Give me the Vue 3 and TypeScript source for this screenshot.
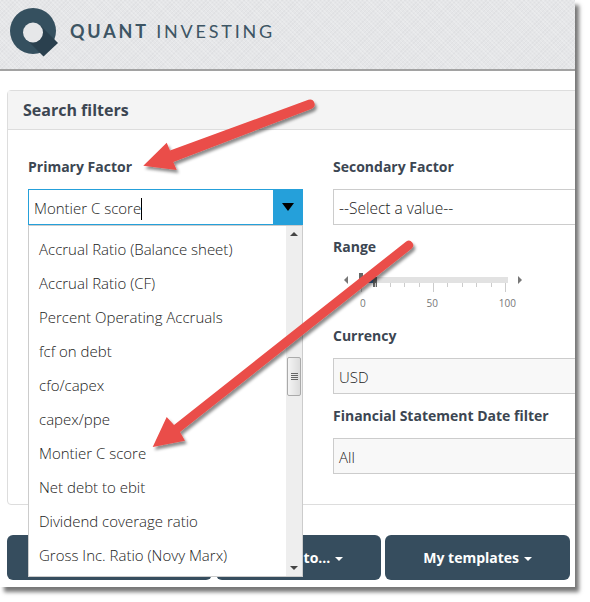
<template>
  <div class="shot">
    <div class="page">
      <header class="topbar">
        <svg class="logo" width="60" height="60" viewBox="0 0 60 60">
          <circle cx="33" cy="31" r="23" fill="#35505f" />
          <path d="M40 25 L58 43 L43.500 56.500 L26 39 Z" fill="#2a404e" />
          <circle cx="33" cy="32.500" r="10" fill="#e6e7e9" />
        </svg>
        <div class="brand"><b>QUANT</b> INVESTING</div>
      </header>

      <section class="panel">
        <div class="panel-head">Search filters</div>
        <div class="panel-body">
          <div class="col-left">
            <label class="lbl">Primary Factor</label>
            <div class="combo">
              <div class="combo-input">Montier C score<span class="caret"></span></div>
              <div class="combo-btn"><span class="tri-down"></span></div>
              <div class="dropdown">
                <ul class="options">
                  <li v-for="f in factors" :key="f">{{ f }}</li>
                </ul>
                <div class="scrollbar">
                  <span class="sb-up"></span>
                  <span class="sb-thumb"><i></i><i></i><i></i><i></i></span>
                  <span class="sb-down"></span>
                </div>
              </div>
            </div>
          </div>

          <div class="col-right">
            <label class="lbl">Secondary Factor</label>
            <div class="sel sel-white">--Select a value--</div>

            <label class="lbl lbl-gap">Range</label>
            <div class="slider">
              <span class="arr-l"></span>
              <div class="slider-main">
                <div class="track">
                  <span class="handle h1"></span>
                  <span class="fill"></span>
                  <span class="handle h2"></span>
                  <span class="rest"></span>
                </div>
                <div class="ticks">
                  <span v-for="n in 11" :key="n" class="tick" :class="{ major: n === 1 || n === 6 || n === 11 }"></span>
                </div>
                <div class="scale">
                  <span>0</span><span>50</span><span>100</span>
                </div>
              </div>
              <span class="arr-r"></span>
            </div>

            <label class="lbl">Currency</label>
            <div class="sel">USD</div>
            <label class="lbl lbl-gap">Financial Statement Date filter</label>
            <div class="sel">All</div>
          </div>
        </div>
      </section>

      <div class="actions">
        <button class="btn b1"></button>
        <button class="btn b2">Export to... <span class="btn-caret"></span></button>
        <button class="btn b3">My templates <span class="btn-caret"></span></button>
      </div>
    </div>

    <svg class="arrows" width="590" height="602" viewBox="0 0 590 602">
      <defs>
        <filter id="arrow-shadow" x="-10%" y="-10%" width="120%" height="125%">
          <feDropShadow dx="2" dy="3" stdDeviation="1.600" flood-color="#000" flood-opacity="0.45" />
        </filter>
      </defs>
      <g fill="#ea4d48" filter="url(#arrow-shadow)">
        <path d="M143.300 165.700 L166.700 142.700 L170 150.500 L308.400 99.800 A4.800 4.800 0 0 1 311.700 108.800 L173.300 162 L176.700 170 Z" />
        <path d="M152.700 447 L166.700 417 L174 425 L406.200 241.500 A4.500 4.500 0 0 1 411.800 248.500 L180 432 L185 440.700 Z" />
      </g>
    </svg>
  </div>
</template>

<script setup lang="ts">
const factors: string[] = [
  'Accrual Ratio (Balance sheet)',
  'Accrual Ratio (CF)',
  'Percent Operating Accruals',
  'fcf on debt',
  'cfo/capex',
  'capex/ppe',
  'Montier C score',
  'Net debt to ebit',
  'Dividend coverage ratio',
  'Gross Inc. Ratio (Novy Marx)',
]
</script>

<style>
html, body {
  margin: 0;
  background: #fff;
}
</style>

<style scoped>
.shot {
  position: relative;
  width: 590px;
  height: 602px;
  overflow: hidden;
  font-family: "Open Sans", "Liberation Sans", sans-serif;
  color: #222;
}
.page {
  width: 575px;
  height: 587px;
  background: #fff;
  box-shadow: 4px 5px 4px #777;
  overflow: hidden;
}
.topbar {
  height: 69px;
  border-bottom: 2px solid #a2a2a2;
  display: flex;
  align-items: center;
  background-color: #e5e6e8;
  background-image:
    repeating-linear-gradient(45deg, rgba(255,255,255,0.2) 0 1px, transparent 1px 3px),
    repeating-linear-gradient(-45deg, rgba(120,120,130,0.05) 0 1px, transparent 1px 3px);
}
.logo {
  flex: none;
  align-self: flex-start;
}
.brand {
  margin-left: 10px;
  margin-top: -8px;
  font-family: Lato, "Open Sans", sans-serif;
  font-size: 18px;
  font-weight: 400;
  letter-spacing: 2.8px;
  color: #3d5564;
  white-space: nowrap;
}
.brand b {
  font-weight: 700;
}
.panel {
  width: 800px;
  height: 415px;
  box-sizing: border-box;
  margin: 19px 0 0 7px;
  border: 1px solid #ddd;
  border-radius: 4px;
}
.panel-head {
  height: 38px;
  line-height: 39px;
  padding-left: 15px;
  background: #f4f4f4;
  border-bottom: 1px solid #ddd;
  font-size: 16px;
  font-weight: 700;
  color: #3c4652;
}
.panel-body {
  display: flex;
  padding: 27px 0 0 20px;
}
.col-left {
  width: 275px;
  flex: none;
}
.col-right {
  width: 440px;
  margin-left: 30px;
  flex: none;
}
.lbl {
  display: block;
  height: 20px;
  line-height: 20px;
  margin-bottom: 12px;
  font-size: 14px;
  font-weight: 700;
  color: #3c4652;
}
.lbl-gap {
  margin-top: 12px;
}
.combo {
  position: relative;
  height: 36px;
  box-sizing: border-box;
  border: 1px solid #25a0da;
  display: flex;
}
.combo-input {
  flex: 1;
  padding-left: 5px;
  line-height: 36px;
  font-size: 15px;
  font-weight: 300;
}
.caret {
  display: inline-block;
  width: 1px;
  height: 22px;
  background: #000;
  vertical-align: -6px;
}
.combo-btn {
  width: 30px;
  margin-right: -1px;
  background: #25a0da;
  display: flex;
  align-items: center;
  justify-content: center;
}
.tri-down {
  border-left: 6px solid transparent;
  border-right: 6px solid transparent;
  border-top: 8px solid #000;
}
.dropdown {
  position: absolute;
  left: -1px;
  top: 35px;
  width: 275px;
  height: 352px;
  box-sizing: border-box;
  border: 1px solid #ccc;
  background: #fff;
  display: flex;
}
.options {
  flex: 1;
  list-style: none;
  margin: 0;
  padding: 6px 0 0 10px;
  font-size: 15px;
  font-weight: 300;
}
.options li {
  height: 34px;
  line-height: 34px;
  white-space: nowrap;
}
.scrollbar {
  position: relative;
  width: 16px;
  background: #eee;
}
.sb-up,
.sb-down {
  position: absolute;
  left: 4px;
  border-left: 4px solid transparent;
  border-right: 4px solid transparent;
}
.sb-up {
  top: 6px;
  border-bottom: 4px solid #444;
}
.sb-down {
  bottom: 6px;
  border-top: 4px solid #444;
}
.sb-thumb {
  position: absolute;
  left: 1px;
  top: 131px;
  width: 14px;
  height: 39px;
  box-sizing: border-box;
  border: 1px solid #aaa;
  border-radius: 2px;
  background: linear-gradient(90deg, #f4f4f4, #dcdcdc);
  display: flex;
  flex-direction: column;
  align-items: center;
  justify-content: center;
  gap: 1px;
}
.sb-thumb i {
  width: 7px;
  height: 1px;
  background: #666;
}
.sel {
  height: 36px;
  box-sizing: border-box;
  border: 1px solid #ccc;
  background: #f8f8f8;
  padding-left: 5px;
  line-height: 36px;
  font-size: 15px;
  font-weight: 300;
}
.sel-white {
  background: #fff;
  font-size: 15.500px;
}
.slider {
  display: flex;
  box-sizing: border-box;
  height: 57px;
  padding: 4px 0 0 11px;
}
.arr-l,
.arr-r {
  flex: none;
  height: 0;
  margin-top: 3px;
  border-top: 4px solid transparent;
  border-bottom: 4px solid transparent;
}
.arr-l {
  border-right: 4px solid #777;
}
.arr-r {
  margin-left: 10px;
  border-left: 4px solid #777;
}
.slider-main {
  width: 150px;
  margin-left: 10px;
}
.track {
  display: flex;
  height: 14px;
  align-items: flex-start;
}
.handle {
  width: 4px;
  background: #666;
  flex: none;
}
.h1 {
  height: 14px;
  margin-left: 1px;
}
.h2 {
  height: 10px;
  margin-top: 4px;
}
.fill {
  width: 10px;
  height: 6px;
  margin-top: 4px;
  background: #3b6ea5;
  flex: none;
}
.rest {
  flex: 1;
  height: 6px;
  margin-top: 4px;
  background: #e2e2e2;
}
.ticks {
  display: flex;
  justify-content: space-between;
  width: 145px;
  margin: -4px 0 0 3px;
  height: 9px;
}
.tick {
  width: 1px;
  height: 4px;
  background: #ccc;
}
.tick.major {
  height: 9px;
}
.scale {
  display: flex;
  justify-content: space-between;
  width: 156px;
  margin: 3px 0 0 2px;
  font-size: 10px;
  line-height: 16px;
  color: #777;
}
.actions {
  display: flex;
  gap: 4px;
  margin: 30px 0 0 7px;
}
.btn {
  height: 45px;
  border: none;
  border-radius: 6px;
  background: #364d5e;
  color: #fff;
  font-family: "Open Sans", "Liberation Sans", sans-serif;
  font-size: 14px;
  font-weight: 700;
  padding: 0;
}
.b1 {
  width: 205px;
}
.b2 {
  width: 165px;
}
.b3 {
  width: 185px;
}
.btn-caret {
  display: inline-block;
  margin-left: 1px;
  vertical-align: 2px;
  border-left: 4px solid transparent;
  border-right: 4px solid transparent;
  border-top: 4px solid #fff;
}
.arrows {
  position: absolute;
  left: 0;
  top: 0;
  pointer-events: none;
}
</style>
